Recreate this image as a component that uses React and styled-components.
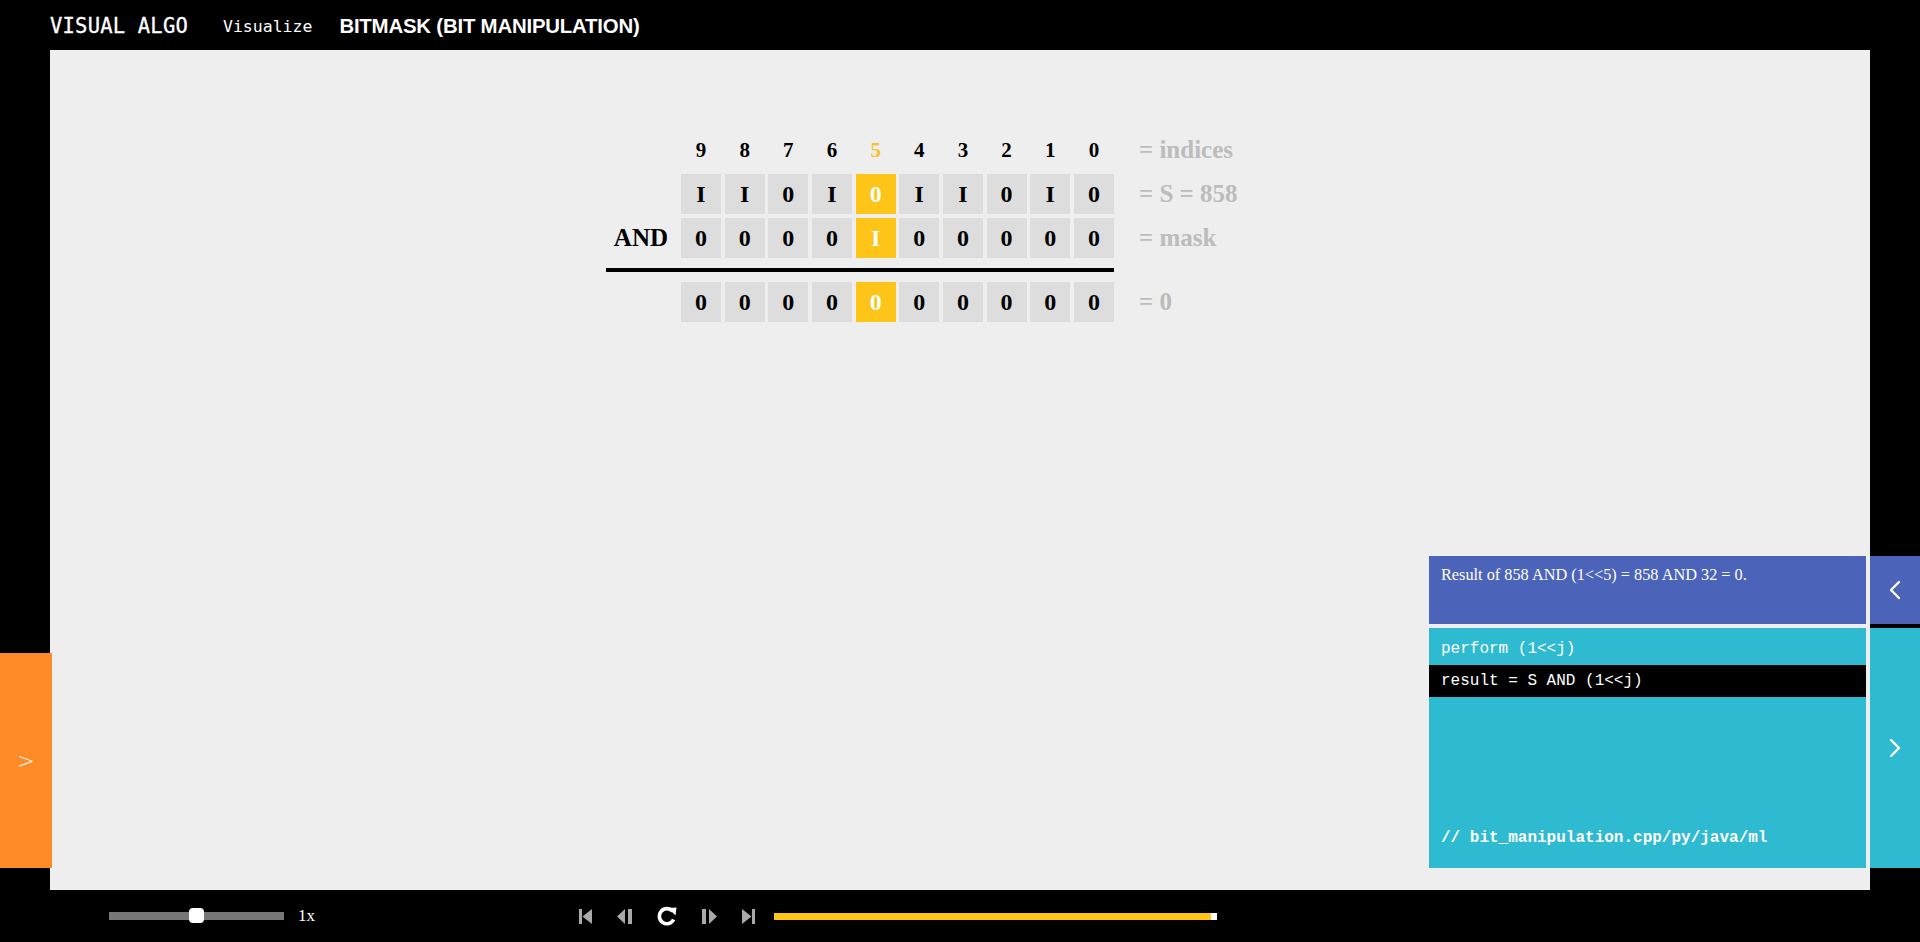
import styled, { createGlobalStyle } from 'styled-components';

const GlobalStyle = createGlobalStyle`
  html, body {
    margin: 0;
    padding: 0;
    background: #000;
  }
  * {
    box-sizing: border-box;
  }
`;

const S = [1, 1, 0, 1, 0, 1, 1, 0, 1, 0];
const MASK = [0, 0, 0, 0, 1, 0, 0, 0, 0, 0];
const RESULT = [0, 0, 0, 0, 0, 0, 0, 0, 0, 0];
const ACTIVE = 4;

const bit = (v) => (v ? 'I' : '0');

const Skip = ({ dir }) => (
  <svg width='13' height='15' viewBox='0 0 13 15'>
    {dir === 'start' ? (
      <>
        <rect x='0' y='0' width='3' height='15' fill='#a9a9a9' />
        <polygon points='13,0 13,15 3.5,7.5' fill='#a9a9a9' />
      </>
    ) : (
      <>
        <polygon points='0,0 0,15 9.5,7.5' fill='#a9a9a9' />
        <rect x='10' y='0' width='3' height='15' fill='#a9a9a9' />
      </>
    )}
  </svg>
);

const Step = ({ dir }) => (
  <svg width='15' height='15' viewBox='0 0 15 15'>
    {dir === 'back' ? (
      <>
        <polygon points='8,0 8,15 0,7.5' fill='#a9a9a9' />
        <rect x='11' y='0' width='4' height='15' fill='#a9a9a9' />
      </>
    ) : (
      <>
        <rect x='0' y='0' width='4' height='15' fill='#a9a9a9' />
        <polygon points='7,0 7,15 15,7.5' fill='#a9a9a9' />
      </>
    )}
  </svg>
);

const Replay = () => (
  <svg width='20' height='20' viewBox='0 0 20 20'>
    <path
      d='M15.5 5.2 A7.5 7.5 0 1 0 16.6 13.5'
      fill='none'
      stroke='#fff'
      strokeWidth='3.6'
    />
    <polygon points='11,2 19.5,1.5 18.5,9.5' fill='#fff' />
  </svg>
);

const Chevron = ({ dir }) => (
  <svg width='14' height='20' viewBox='0 0 14 20'>
    <polyline
      points={dir === 'left' ? '11,2 3,10 11,18' : '3,2 11,10 3,18'}
      fill='none'
      stroke='#fff'
      strokeWidth='2.4'
      strokeLinecap='round'
      strokeLinejoin='round'
    />
  </svg>
);

const App = () => {
  return (
    <Page>
      <GlobalStyle />
      <Header>
        <Logo>VISUAL ALGO</Logo>
        <NavLink>Visualize</NavLink>
        <Title>BITMASK (BIT MANIPULATION)</Title>
      </Header>

      <Stage>
        <BitTable>
          <Row $small>
            <Lead />
            <Cells>
              {S.map((_, i) => (
                <Index key={i} $active={i === ACTIVE}>
                  {9 - i}
                </Index>
              ))}
            </Cells>
            <Tail>= indices</Tail>
          </Row>
          <Row>
            <Lead />
            <Cells>
              {S.map((v, i) => (
                <Cell key={i} $active={i === ACTIVE}>
                  {bit(v)}
                </Cell>
              ))}
            </Cells>
            <Tail>= S = 858</Tail>
          </Row>
          <Row>
            <Lead>AND</Lead>
            <Cells>
              {MASK.map((v, i) => (
                <Cell key={i} $active={i === ACTIVE}>
                  {bit(v)}
                </Cell>
              ))}
            </Cells>
            <Tail>= mask</Tail>
          </Row>
          <Rule />
          <Row>
            <Lead />
            <Cells>
              {RESULT.map((v, i) => (
                <Cell key={i} $active={i === ACTIVE}>
                  {bit(v)}
                </Cell>
              ))}
            </Cells>
            <Tail>= 0</Tail>
          </Row>
        </BitTable>
      </Stage>

      <Footer>
        <Speed>
          <Track>
            <Thumb />
          </Track>
          <SpeedLabel>1x</SpeedLabel>
        </Speed>
        <Controls>
          <IconButton>
            <Skip dir='start' />
          </IconButton>
          <IconButton>
            <Step dir='back' />
          </IconButton>
          <IconButton>
            <Replay />
          </IconButton>
          <IconButton>
            <Step dir='forward' />
          </IconButton>
          <IconButton>
            <Skip dir='end' />
          </IconButton>
        </Controls>
        <Progress>
          <ProgressEnd />
        </Progress>
      </Footer>

      <ActionsTab>&gt;</ActionsTab>

      <SidePanels>
        <Status>Result of 858 AND (1&lt;&lt;5) = 858 AND 32 = 0.</Status>
        <Tab $color='#4b64ba'>
          <Chevron dir='left' />
        </Tab>
        <Code>
          <CodeLine>perform (1&lt;&lt;j)</CodeLine>
          <CodeLine $current>result = S AND (1&lt;&lt;j)</CodeLine>
          <CodeNote>// bit_manipulation.cpp/py/java/ml</CodeNote>
        </Code>
        <Tab $color='#2ebad1'>
          <Chevron dir='right' />
        </Tab>
      </SidePanels>
    </Page>
  );
};

const Page = styled.div`
  position: relative;
  width: 1920px;
  height: 942px;
  background: #000;
  overflow: hidden;
`;

const Header = styled.header`
  display: flex;
  align-items: center;
  height: 50px;
  padding: 2px 0 0 50px;
  color: #fff;
`;

const Logo = styled.div`
  font-family: 'DejaVu Sans Mono', monospace;
  font-size: 20.5px;
  letter-spacing: 0.2px;
  -webkit-text-stroke: 0.3px #fff;
`;

const NavLink = styled.div`
  margin-left: 35px;
  font-family: 'DejaVu Sans Mono', monospace;
  font-size: 16.5px;
`;

const Title = styled.h1`
  margin: 0 0 0 27px;
  font-family: 'Liberation Sans', Arial, sans-serif;
  font-size: 20.4px;
  font-weight: 700;
  letter-spacing: -0.2px;
`;

const Stage = styled.main`
  height: 840px;
  margin: 0 50px;
  padding: 80px 0 0 556px;
  background: #eee;
`;

const BitTable = styled.div`
  display: flex;
  flex-direction: column;
  gap: 4px;
  font-family: 'Liberation Serif', 'Times New Roman', serif;
  font-weight: 700;
`;

const Row = styled.div`
  display: flex;
  align-items: center;
  height: 40px;
  font-size: ${(p) => (p.$small ? '21px' : '24px')};
  margin-top: ${(p) => (p.$small ? '0' : '0')};
`;

const Lead = styled.div`
  width: 75px;
  padding-right: 13px;
  text-align: right;
  font-size: 25px;
  color: #000;
`;

const Cells = styled.div`
  display: flex;
  gap: 3.67px;
`;

const Index = styled.div`
  width: 40px;
  text-align: center;
  color: ${(p) => (p.$active ? '#fcbf26' : '#000')};
`;

const Cell = styled.div`
  display: flex;
  align-items: center;
  justify-content: center;
  width: 40px;
  height: 40px;
  font-size: 24px;
  background: ${(p) => (p.$active ? '#fec418' : '#ddd')};
  color: ${(p) => (p.$active ? '#fff' : '#000')};
`;

const Tail = styled.div`
  margin-left: 25px;
  font-size: 25px;
  color: #bcbcbc;
`;

const Rule = styled.div`
  width: 508px;
  height: 4px;
  margin: 6px 0;
  background: #000;
`;

const Footer = styled.footer`
  display: flex;
  align-items: center;
  height: 52px;
  padding-left: 109px;
`;

const Speed = styled.div`
  display: flex;
  align-items: center;
  width: 470px;
`;

const Track = styled.div`
  position: relative;
  width: 175px;
  height: 8px;
  background: #777;
`;

const Thumb = styled.div`
  position: absolute;
  left: 80px;
  top: -4px;
  width: 15px;
  height: 15px;
  border-radius: 4px;
  background: #fff;
`;

const SpeedLabel = styled.span`
  margin-left: 14px;
  color: #fff;
  font-family: 'Liberation Serif', 'Times New Roman', serif;
  font-size: 17px;
`;

const Controls = styled.div`
  display: flex;
  align-items: center;
  gap: 25px;
`;

const IconButton = styled.div`
  display: flex;
  align-items: center;
  line-height: 0;
`;

const Progress = styled.div`
  display: flex;
  justify-content: flex-end;
  width: 443px;
  height: 7px;
  margin-left: 19px;
  background: #fec418;
`;

const ProgressEnd = styled.div`
  width: 6px;
  height: 100%;
  background: #fff;
`;

const ActionsTab = styled.div`
  position: absolute;
  left: 0;
  top: 653px;
  display: flex;
  align-items: center;
  justify-content: center;
  width: 52px;
  height: 215px;
  background: #ff8b28;
  color: #fff;
  font-family: 'DejaVu Sans', sans-serif;
  font-size: 22px;
  font-weight: 300;
`;

const SidePanels = styled.aside`
  position: absolute;
  left: 1429px;
  top: 556px;
  display: grid;
  grid-template-columns: 437px 50px;
  grid-template-rows: 68px 240px;
  column-gap: 4px;
  row-gap: 4px;
`;

const Status = styled.div`
  padding: 10px 12px;
  background: #4b64ba;
  color: #fff;
  font-family: 'Liberation Serif', 'Times New Roman', serif;
  font-size: 16.3px;
  line-height: 18px;
`;

const Tab = styled.div`
  display: flex;
  align-items: center;
  justify-content: center;
  background: ${(p) => p.$color};
`;

const Code = styled.div`
  display: flex;
  flex-direction: column;
  padding: 5px 0 14px;
  background: #2ebad1;
  color: #fff;
  font-family: 'Courier New', 'Nimbus Mono PS', FreeMono, 'Liberation Mono', monospace;
  font-size: 16px;
`;

const CodeLine = styled.div`
  height: 32px;
  padding: 0 12px;
  line-height: 32px;
  white-space: pre;
  background: ${(p) => (p.$current ? '#000' : 'transparent')};
`;

const CodeNote = styled(CodeLine)`
  margin-top: auto;
  font-weight: 700;
`;

export default App;
